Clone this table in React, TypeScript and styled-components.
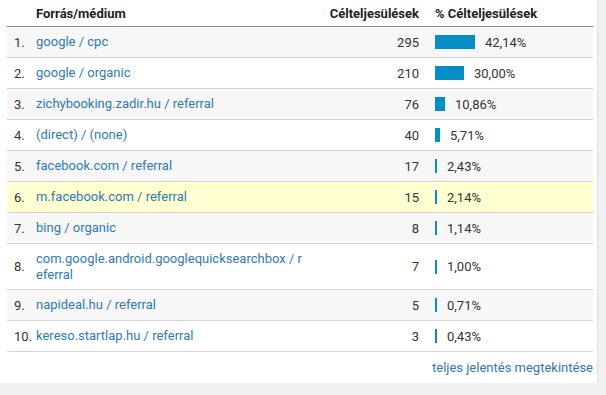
import React from "react";
import styled, { createGlobalStyle } from "styled-components";

const GlobalStyle = createGlobalStyle`
  body {
    margin: 0;
    background: #f1f1f1;
    font-family: Roboto, "Liberation Sans", Arial, sans-serif;
  }
`;

const Card = styled.div`
  width: 597px;
  background: #fff;
  box-shadow: 0 1px 2px rgba(0, 0, 0, 0.18);
  padding: 0 4px 0 7px;
  box-sizing: border-box;
  font-size: 13px;
  color: #333;
`;

const grid = `
  display: grid;
  grid-template-columns: 29px 269px 115px 1fr;
  align-items: center;
`;

const HeaderRow = styled.div`
  ${grid}
  height: 26px;
  border-bottom: 1px solid #8f8f8f;
  font-weight: 700;
  color: #222;
`;

const Row = styled.div<{ $bg: string; $tall?: boolean }>`
  ${grid}
  height: ${({ $tall }) => ($tall ? "45px" : "30px")};
  border-bottom: 1px solid #d6d6d6;
  background: ${({ $bg }) => $bg};
`;

const Index = styled.div`
  padding-left: 7px;
`;

const Source = styled.a`
  color: #2f7ab3;
  text-decoration: none;
  word-break: break-all;
  line-height: 16px;
`;

const Count = styled.div`
  text-align: right;
  padding-right: 1px;
`;

const PctCell = styled.div`
  display: flex;
  align-items: center;
  padding-left: 15px;
`;

const Bar = styled.div`
  height: 14px;
  background: #058dc7;
  margin-right: 10px;
`;

const Footer = styled.div`
  height: 31px;
  display: flex;
  align-items: center;
  justify-content: flex-end;
`;

const FooterLink = styled.a`
  color: #2f7ab3;
  text-decoration: none;
`;

const rows = [
  { src: "google / cpc", n: 295, pct: 42.14 },
  { src: "google / organic", n: 210, pct: 30.0 },
  { src: "zichybooking.zadir.hu / referral", n: 76, pct: 10.86 },
  { src: "(direct) / (none)", n: 40, pct: 5.71 },
  { src: "facebook.com / referral", n: 17, pct: 2.43 },
  { src: "m.facebook.com / referral", n: 15, pct: 2.14 },
  { src: "bing / organic", n: 8, pct: 1.14 },
  { src: "com.google.android.googlequicksearchbox / referral", n: 7, pct: 1.0 },
  { src: "napideal.hu / referral", n: 5, pct: 0.71 },
  { src: "kereso.startlap.hu / referral", n: 3, pct: 0.43 },
];

const fmt = (p: number) => p.toFixed(2).replace(".", ",") + "%";

export default function App() {
  return (
    <>
      <GlobalStyle />
      <Card>
        <HeaderRow>
          <div />
          <div>Forrás/médium</div>
          <Count>Célteljesülések</Count>
          <PctCell>% Célteljesülések</PctCell>
        </HeaderRow>
        {rows.map((r, i) => {
          const bg = i === 5 ? "#ffffd1" : i % 2 === 0 ? "#f7f7f7" : "#fff";
          return (
            <Row key={r.src} $bg={bg} $tall={r.src.length > 40}>
              <Index>{i + 1}.</Index>
              <Source href="#">{r.src}</Source>
              <Count>{r.n}</Count>
              <PctCell>
                <Bar style={{ width: Math.max(2, Math.round(r.pct * 0.95)) }} />
                {fmt(r.pct)}
              </PctCell>
            </Row>
          );
        })}
        <Footer>
          <FooterLink href="#">teljes jelentés megtekintése</FooterLink>
        </Footer>
      </Card>
    </>
  );
}
